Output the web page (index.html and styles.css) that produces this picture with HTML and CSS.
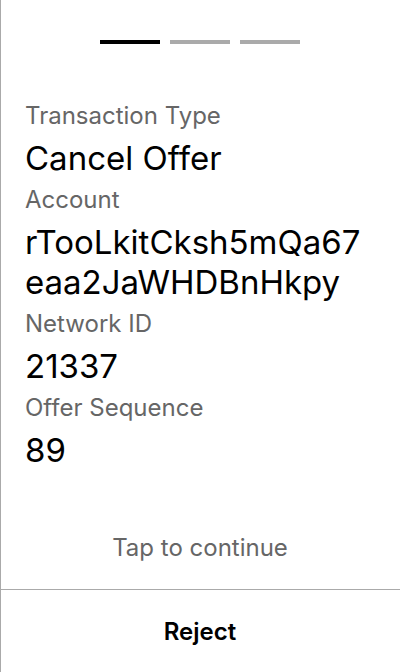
FILE: index.html
```html
<!DOCTYPE html>
<html>
<head>
<meta charset="utf-8">
<link rel="stylesheet" href="styles.css">
</head>
<body>
<div class="screen">
  <div class="steps">
    <span class="step active"></span>
    <span class="step"></span>
    <span class="step"></span>
  </div>
  <div class="fields">
    <div class="label">Transaction Type</div>
    <div class="value">Cancel Offer</div>
    <div class="label">Account</div>
    <div class="value">rTooLkitCksh5mQa67eaa2JaWHDBnHkpy</div>
    <div class="label">Network ID</div>
    <div class="value">21337</div>
    <div class="label">Offer Sequence</div>
    <div class="value">89</div>
  </div>
  <div class="hint">Tap to continue</div>
  <div class="footer">
    <button class="reject">Reject</button>
  </div>
</div>
</body>
</html>
```
FILE: styles.css
```css
html, body {
  margin: 0;
  padding: 0;
  background: #fff;
}
body {
  font-family: Inter, "Noto Sans", sans-serif;
  color: #000;
}
.screen {
  width: 400px;
  height: 672px;
  box-sizing: border-box;
  border-left: 1px solid #aaa;
  display: flex;
  flex-direction: column;
}
.steps {
  display: flex;
  justify-content: center;
  gap: 10px;
  padding-top: 40px;
  margin-left: -1px;
}
.step {
  display: block;
  width: 60px;
  height: 4px;
  background: #aaa;
}
.step.active {
  background: #000;
}
.fields {
  padding: 56px 32px 0 24px;
  flex: 1;
}
.label {
  font-size: 24px;
  line-height: 32px;
  color: #666;
}
.value {
  font-size: 33px;
  line-height: 40px;
  margin: 6px 0 6px;
  word-break: break-all;
}
.hint {
  text-align: center;
  font-size: 24px;
  color: #666;
  padding-bottom: 27px;
  margin-left: -1px;
}
.footer {
  border-top: 1px solid #aaa;
  height: 82px;
  display: flex;
  align-items: center;
  justify-content: center;
  margin-left: -1px;
}
.reject {
  background: none;
  border: none;
  font-family: inherit;
  font-size: 24px;
  font-weight: 600;
  color: #000;
  padding: 0;
}
```
